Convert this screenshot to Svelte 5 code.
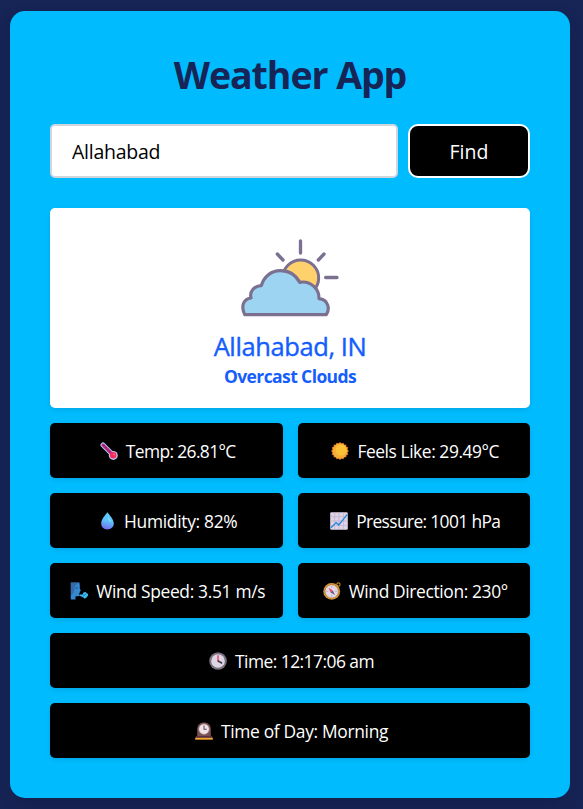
<script>
  let city = $state('Allahabad');

  const readings = [
    { icon: 'thermometer', text: 'Temp: 26.81°C', tracking: -0.62 },
    { icon: 'sun', text: 'Feels Like: 29.49°C', tracking: -0.43 },
    { icon: 'drop', text: 'Humidity: 82%', tracking: -0.3 },
    { icon: 'chart', text: 'Pressure: 1001 hPa', tracking: -0.64 },
    { icon: 'wind', text: 'Wind Speed: 3.51 m/s', tracking: -0.32 },
    { icon: 'compass', text: 'Wind Direction: 230°', tracking: -0.37 },
    { icon: 'clock', text: 'Time: 12:17:06 am', tracking: -0.53, wide: true },
    { icon: 'mantel', text: 'Time of Day: Morning', tracking: -0.32, wide: true }
  ];
</script>

{#snippet glyph(name)}
  <svg class="glyph" viewBox="0 0 18 18" aria-hidden="true">
    {#if name === 'thermometer'}
      <path d="M3 3 L13 13" stroke="#b9c3f0" stroke-width="5" stroke-linecap="round" />
      <circle cx="13.3" cy="13.4" r="4.5" fill="#b9c3f0" />
      <path d="M3 3 L12 12" stroke="#b5257d" stroke-width="3" stroke-linecap="round" />
      <path d="M4.6 2.8l-1 1M6.6 4.8l-1 1M8.6 6.8l-1 1M10.6 8.8l-1 1" stroke="#5c2148" stroke-width=".8" />
      <circle cx="13.2" cy="13.3" r="3.2" fill="#f52b5b" />
      <circle cx="14" cy="12.4" r="1" fill="#ff6681" />
    {:else if name === 'sun'}
      {#each [0, 22.5, 45, 67.5] as turn}
        <rect x="2.7" y="2.7" width="12.6" height="12.6" fill="#ee812d" transform="rotate({turn} 9 9)" />
      {/each}
      <circle cx="9" cy="9" r="7.4" fill="#f4ad32" />
      <circle cx="10" cy="8" r="5.5" fill="#fbc238" />
    {:else if name === 'drop'}
      <defs>
        <linearGradient id="water" x1=".6" y1="0" x2=".4" y2="1">
          <stop offset="0" stop-color="#61c9f5" />
          <stop offset=".5" stop-color="#5fc0f8" />
          <stop offset="1" stop-color="#7469ef" />
        </linearGradient>
      </defs>
      <path d="M9.4 .3C11.900 3.4 15.800 7.600 15.800 11.600c0 3.700-2.900 5.900-6.400 5.900S3.200 15.300 3.200 11.600C3.200 7.600 6.900 3.400 9.400 .3z" fill="url(#water)" />
      <path d="M9.800 4c1.300 1.800 3.300 4 3.600 6.200-1.700-.3-3.600-2.700-3.600-6.200z" fill="#7cdafb" />
    {:else if name === 'chart'}
      <rect x=".2" y=".3" width="17.6" height="17.4" rx="1.2" fill="#ddd5e7" />
      <path d="M4.7.3v17.4M9 .3v17.4M13.4.3v17.4M.2 4.7h17.6M.2 9h17.6M.2 13.4h17.6" stroke="#bbaac9" stroke-width=".6" />
      <path d="M1 15.7l5.1-5.1 2.7 2.3L17.3 2.4" fill="none" stroke="#278bdd" stroke-width="1.4" />
    {:else if name === 'wind'}
      <path d="M.8.5H9.400l.4 2.800v3.200l1 2.200-1 1.100v1.100l-1 .6.8 1.200-.8 1.500H5.500v3.300H.8z" fill="#3489d2" />
      <path d="M.8.5H9L5 4 4 10l-3.200 4z" fill="#355994" opacity=".65" />
      <path d="M5.500 6.300l2.300-.6" stroke="#194b83" stroke-width="1" />
      <path d="M9.500 12.400h3.200c.4-2.800 3.400-3 3.900-1.100 2.300.5 2.300 2.800.5 3.300-.6 2.300-3.200 2.300-3.800.6-1.300.4-1.800-1.100-3.800-1.100z" fill="#3eb5eb" />
      <path d="M13 13c1.600.7 2.900-.2 2.400-1.200" fill="none" stroke="#1775ba" stroke-width=".8" />
    {:else if name === 'compass'}
      <circle cx="15.400" cy="2.600" r="1.700" fill="none" stroke="#b98028" stroke-width="1.100" />
      <circle cx="8.700" cy="9.400" r="8.400" fill="#d9982f" />
      <circle cx="8.700" cy="9.400" r="6.700" fill="#e2d8e5" stroke="#a66a35" stroke-width=".6" />
      <path d="M8.700 4v2M8.700 13v2M3.300 9.400h2M12.100 9.400h2" stroke="#b5a6bc" stroke-width=".8" />
      <path d="M5.600 5.700l4.200 2.700-2.200 2z" fill="#ee4269" />
      <path d="M12 13.100l-4.400-2.700 2.200-2z" fill="#685a74" />
    {:else if name === 'clock'}
      <circle cx="9" cy="9" r="8.800" fill="#77717d" />
      <circle cx="9" cy="9" r="6.800" fill="#ddd5e3" />
      <path d="M9 9V3.200" stroke="#ec456c" stroke-width="1.500" />
      <path d="M8.600 8.800l4.500 2.400" stroke="#443650" stroke-width="1.600" />
    {:else if name === 'mantel'}
      <path d="M2.200 15V7.300C2.200 3.100 5 .4 9 .4s6.800 2.700 6.800 6.900V15z" fill="#795154" />
      <path d="M1.200 14h15.600l.9 2H.3z" fill="#5a3340" />
      <rect x=".2" y="15.800" width="17.600" height="1.900" fill="#f4a52b" />
      <circle cx="9" cy="7.100" r="5.200" fill="#eee2e9" stroke="#b59292" stroke-width=".6" />
      <path d="M9 7.300V3.600" stroke="#685562" stroke-width="1.100" />
      <path d="M8.700 7.300h3" stroke="#685562" stroke-width="1.100" />
    {/if}
  </svg>
{/snippet}

<main>
  <section class="app">
    <h1>Weather App</h1>
    <form onsubmit={(e) => e.preventDefault()}>
      <input bind:value={city} aria-label="City" />
      <button>Find</button>
    </form>
    <article class="summary">
      <svg class="weather" viewBox="60 24 300 240" aria-hidden="true">
        <g stroke="#7b7090" stroke-width="10" stroke-linecap="round" stroke-linejoin="round">
          <path d="M241.500 33V69M172 72L189 90M312 72L295 90M317 142.500H351" />
          <circle cx="242" cy="144" r="54" fill="#ffd16c" stroke-width="9" />
          <path d="M74 254H319C330 237 326 209 297 206C298 175 270 151 239 157C226 133 205 122 181 122C152 122 131 141 124 167C102 168 88 184 93 204C70 207 62 228 74 254Z" fill="#9dd4f2" stroke-width="9.500" />
        </g>
      </svg>
      <h2>Allahabad, IN</h2>
      <p>Overcast Clouds</p>
    </article>
    <div class="readings">
      {#each readings as item}
        <div class="reading" class:wide={item.wide}>
          {@render glyph(item.icon)}
          <span style:letter-spacing="{item.tracking}px">{item.text}</span>
        </div>
      {/each}
    </div>
  </section>
</main>

<style>
  :global(body) {
    margin: 0;
    background: #162456;
  }
  main {
    box-sizing: border-box;
    height: 809px;
    padding: 11px 13px 11px 10px;
    overflow: hidden;
    background: #162456;
    font-family: "Open Sans", "Noto Sans", sans-serif;
  }
  .app {
    box-sizing: border-box;
    height: 787px;
    padding: 39px 40px 40px;
    border-radius: 15px;
    background: #00bcff;
    box-shadow: 0 8px 20px rgba(0, 0, 0, 0.1);
  }
  h1 {
    margin: 0 0 24px;
    height: 50px;
    color: #162456;
    font-size: 37.5px;
    line-height: 50px;
    letter-spacing: -1.06px;
    text-align: center;
  }
  form {
    display: flex;
    gap: 10px;
    height: 54px;
    margin-bottom: 30px;
  }
  input {
    box-sizing: border-box;
    flex: 1;
    min-width: 0;
    padding: 0 20px;
    border: 2px solid #d1d5dc;
    border-radius: 5px;
    outline: 0;
    background: #fff;
    color: #000;
    font: 19.5px "Open Sans", sans-serif;
    letter-spacing: -0.25px;
  }
  button {
    box-sizing: border-box;
    width: 122px;
    padding: 0;
    border: 2px solid #fff;
    border-radius: 10px;
    background: #000;
    color: #fff;
    font: 19.5px "Open Sans", sans-serif;
  }
  .summary {
    display: flex;
    flex-direction: column;
    align-items: center;
    box-sizing: border-box;
    height: 200px;
    margin-bottom: 15px;
    padding-top: 30px;
    border-radius: 5px;
    background: #fff;
    color: #155dfc;
    box-shadow: 0 2px 5px rgba(0, 0, 0, 0.1);
  }
  .weather {
    flex: none;
    width: 100px;
    height: 80px;
    fill: none;
  }
  h2 {
    margin: 9px 0 0;
    font-size: 25.5px;
    font-weight: 500;
    line-height: 38px;
    letter-spacing: -0.4px;
    -webkit-text-stroke: 0.4px #155dfc;
  }
  .summary p {
    margin: 0;
    font-size: 17.5px;
    font-weight: 700;
    line-height: 22px;
    letter-spacing: -0.6px;
  }
  .readings {
    display: grid;
    grid-template-columns: 1fr 1fr;
    gap: 15px;
  }
  .reading {
    display: flex;
    align-items: center;
    justify-content: center;
    height: 55px;
    border-radius: 5px;
    background: #000;
    color: #fff;
    font-size: 17.4px;
    line-height: 25px;
    white-space: nowrap;
    box-shadow: 0 2px 5px rgba(0, 0, 0, 0.1);
  }
  .reading span {
    padding-top: 2px;
  }
  .wide {
    grid-column: span 2;
  }
  .glyph {
    width: 18px;
    height: 18px;
    margin: 1px 8px 0 3px;
    fill: none;
  }
</style>
